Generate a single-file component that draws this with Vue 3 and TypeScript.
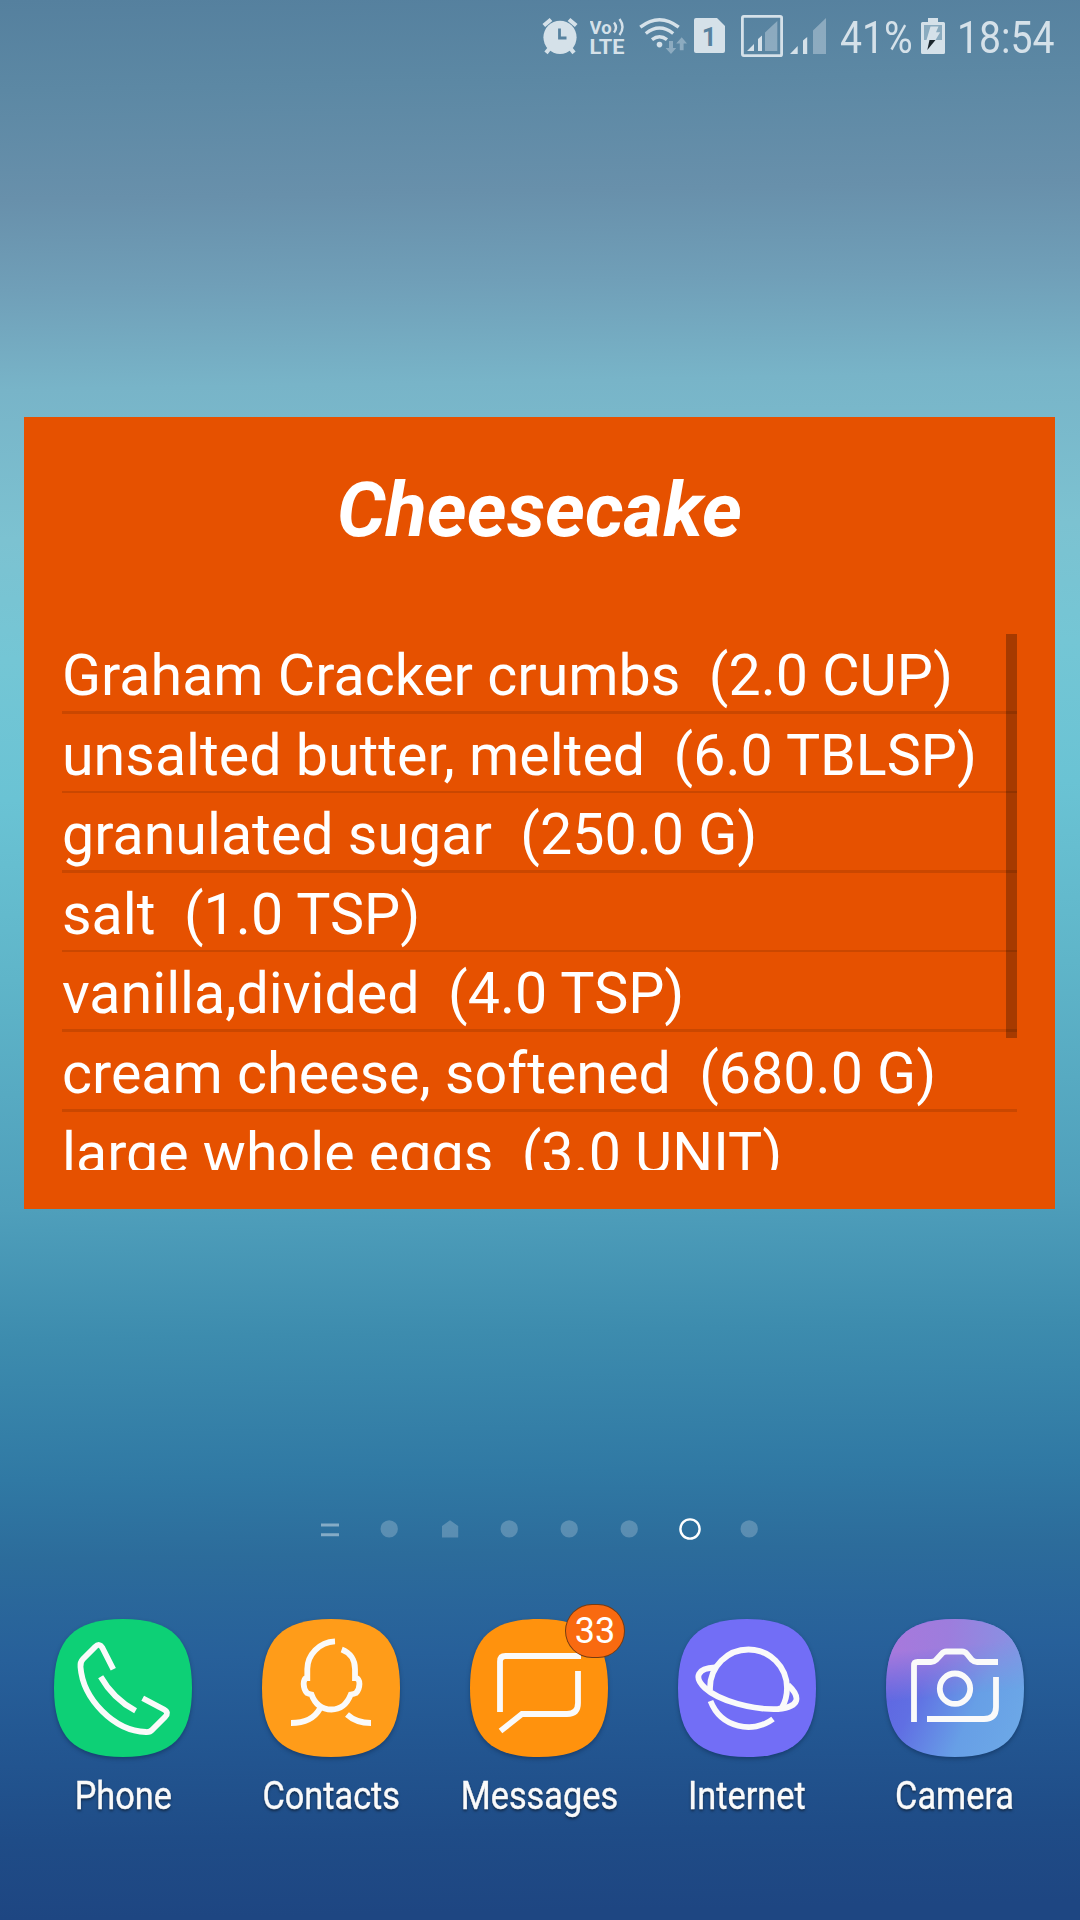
<script setup lang="ts">
interface Ingredient {
  name: string
  amount: string
}

interface DockApp {
  id: string
  label: string
  fill: string
  badge?: number
}

const title = 'Cheesecake'

const ingredients: Ingredient[] = [
  { name: 'Graham Cracker crumbs', amount: '(2.0 CUP)' },
  { name: 'unsalted butter, melted', amount: '(6.0 TBLSP)' },
  { name: 'granulated sugar', amount: '(250.0 G)' },
  { name: 'salt', amount: '(1.0 TSP)' },
  { name: 'vanilla,divided', amount: '(4.0 TSP)' },
  { name: 'cream cheese, softened', amount: '(680.0 G)' },
  { name: 'large whole eggs', amount: '(3.0 UNIT)' },
]

const pages: string[] = ['lines', 'dot', 'home', 'dot', 'dot', 'dot', 'current', 'dot']

const apps: DockApp[] = [
  { id: 'phone', label: 'Phone', fill: '#0dd076' },
  { id: 'contacts', label: 'Contacts', fill: '#ff9c19' },
  { id: 'messages', label: 'Messages', fill: '#ff920d', badge: 33 },
  { id: 'internet', label: 'Internet', fill: '#726ef6' },
  { id: 'camera', label: 'Camera', fill: 'url(#camBase)' },
]

const squircle = 'M69 0C118 0 138 20 138 69C138 118 118 138 69 138C20 138 0 118 0 69C0 20 20 0 69 0Z'
</script>

<template>
  <div class="screen">
    <header class="status">
      <svg class="alarm" width="36" height="75" viewBox="542 0 36 75">
        <circle cx="560" cy="37.3" r="16.6" />
        <path class="line" d="M543.8 25.5L551 19.5M576.2 25.5L569 19.5" stroke-width="4.2" />
        <path class="line" d="M549.5 48.5L546 52.8M570.5 48.5L574 52.8" stroke-width="4.2" />
        <path d="M559.5 28.5V38H566.5" fill="none" stroke="#57829f" stroke-width="2.8" />
      </svg>
      <svg class="volte" width="36" height="75" viewBox="590 0 36 75">
        <text x="589.6" y="33.8" font-size="18.5" textLength="22" lengthAdjust="spacingAndGlyphs">Vo</text>
        <text x="589.4" y="54" font-size="20.5" textLength="35" lengthAdjust="spacingAndGlyphs">LTE</text>
        <path class="line" d="M614 22.5Q618 27.5 614 32.5M619.5 19Q625.5 27 619.5 35" stroke-width="2.4" />
      </svg>
      <svg class="wifi" width="50" height="75" viewBox="638 0 50 75">
        <path class="line" d="M640.3 27.2Q659.5 12.3 678.7 27.2M645.8 33.5Q659.5 22.5 673.2 33.5M652 39.7Q659.5 33.8 667 39.7" stroke-width="3.4" />
        <circle cx="659.5" cy="44.6" r="2.8" />
        <path d="M669 41H673V48H676.2L671 54L665.6 48H669ZM679.8 50.3V43.5H676.2L681.7 37.3L687 43.5H683.6V50.3Z" opacity=".42" />
      </svg>
      <svg class="sim" width="31" height="75" viewBox="694 0 31 75">
        <path d="M696 18H717L725 26V51Q725 53 723 53H696Q694 53 694 51V20Q694 18 696 18Z" />
        <text x="709.3" y="45.5" font-size="26" text-anchor="middle" fill="#57829f">1</text>
      </svg>
      <svg class="boxed" width="42" height="75" viewBox="741 0 42 75">
        <rect x="742.4" y="16.4" width="39.2" height="39.2" rx="1.5" class="line" stroke-width="2.8" />
        <path d="M747 51L754 44V51ZM758 39L762 35.5V51H758Z" />
        <path d="M765 32.5L777.3 21V51H765Z" opacity=".42" />
      </svg>
      <svg class="signal" width="36" height="75" viewBox="790 0 36 75">
        <path d="M790 54L797.7 46V54ZM803 40.5L807.2 37V54H803Z" />
        <path d="M813 30.5L826 18V54H813Z" opacity=".42" />
      </svg>
      <span class="pct"><b>41%</b></span>
      <svg class="battery" width="24" height="75" viewBox="921 0 24 75">
        <path d="M928 18H938V22H943.5Q945 22 945 23.5V52.5Q945 54 943.5 54H922.5Q921 54 921 52.5V23.5Q921 22 922.5 22H928Z" />
        <path d="M924 25H942V40H924Z" fill="#8aabbf" />
        <path d="M930.5 26.5H938.5L936 32.3H940.2L935.5 40H926.5Z" />
        <path d="M929.5 40H935.5L927.3 50Z" fill="#1c262d" />
      </svg>
      <span class="time"><b>18:54</b></span>
    </header>

    <section class="widget">
      <h1>{{ title }}</h1>
      <div class="list">
        <div v-for="item in ingredients" :key="item.name" class="row">{{ item.name }}&nbsp; {{ item.amount }}</div>
        <div class="scrollbar"></div>
      </div>
    </section>

    <nav class="pages">
      <svg v-for="(page, i) in pages" :key="i" width="60" height="30" viewBox="0 0 60 30">
        <path v-if="page === 'lines'" d="M21 9.5H39V12.5H21ZM21 19.2H39V22.2H21Z" fill="#fff" opacity=".42" />
        <path v-else-if="page === 'home'" d="M22 23.500V12L30 6.300L38.200 12V23.500Z" fill="#fff" opacity=".22" />
        <circle v-else-if="page === 'current'" cx="30" cy="15" r="9.6" fill="none" stroke="#fff" stroke-width="2.4" />
        <circle v-else cx="29.2" cy="14.9" r="8.7" fill="#fff" opacity=".22" />
      </svg>
    </nav>

    <footer class="dock">
      <div v-for="app in apps" :key="app.id" class="app">
        <div class="icon">
          <svg width="138" height="138" viewBox="0 0 138 138">
            <defs v-if="app.id === 'camera'">
              <linearGradient id="camBase" x1="0.05" y1="0.45" x2="0.95" y2="0.85">
                <stop offset="0" stop-color="#5f68e2" />
                <stop offset=".2" stop-color="#606fe3" />
                <stop offset=".42" stop-color="#6488e5" />
                <stop offset=".62" stop-color="#679fe6" />
                <stop offset="1" stop-color="#6ca8e7" />
              </linearGradient>
              <linearGradient id="camTop" x1="0.1" y1="0" x2="1" y2="0.1">
                <stop offset="0" stop-color="#a679dc" />
                <stop offset=".4" stop-color="#9d7ddd" />
                <stop offset="1" stop-color="#8594e3" />
              </linearGradient>
              <linearGradient id="camFade" x1="0" y1="0" x2="0.1" y2="1">
                <stop offset="0" stop-color="#fff" />
                <stop offset=".24" stop-color="#fff" />
                <stop offset=".6" stop-color="#000" />
              </linearGradient>
              <mask id="camMask"><rect width="138" height="138" fill="url(#camFade)" /></mask>
            </defs>
            <path :d="squircle" :fill="app.fill" />
            <path v-if="app.id === 'camera'" :d="squircle" fill="url(#camTop)" mask="url(#camMask)" />
            <g v-if="app.id === 'phone'" class="glyph">
              <path d="M59.3 50.3L48.5 29Q45.5 23.5 41 28L29 40Q26 43 26.5 48C29 80 60 112 92 113Q96 113.3 98.5 110.5L111 98Q115.5 93.5 110 90.5L88.7 79.3" />
              <path d="M46.7 57.7Q59 79.5 81.6 91.8" />
            </g>
            <g v-else-if="app.id === 'contacts'" class="glyph">
              <path d="M73 22.3C57 23 45.3 36 45.3 50V59C40 59 41 70 45 74Q47 75 49.5 75.5C53 85 60 90.5 69.5 90.5C79 90.5 85 85 88.8 75.5Q92 75 94 74C98 70 99.500 59 93 59V50C93 41 88 33.500 79.700 30.500" />
              <path d="M29 104C43 104 52 100 58 89.500M85 95.500C91 101 98 104 109 104" />
            </g>
            <g v-else-if="app.id === 'messages'" class="glyph">
              <path d="M30 93V42.500Q30 37 35.500 37H111" />
              <path d="M108 52V84Q108 95 97 95H52L30.500 112" />
            </g>
            <g v-else-if="app.id === 'internet'" class="glyph">
              <path d="M32 71V69A38.500 38.500 0 0 1 109 69Q109 80 104 88.500" />
              <path d="M37 48.500C20 49 15 58 27 69C41 82 75 91 100 90C122 88 123 78 110 66" />
              <path d="M32.500 82C43 109 75 115 95 100" />
            </g>
            <g v-else class="glyph">
              <path d="M28 103V46.500Q28 43 31.500 43H45Q48 43 50 41L55.500 35Q57.500 32.500 60.500 32.500H76Q79 32.500 81 35L86 41Q88 43 91 43H112" />
              <path d="M110 58V88Q110 100 98 100H41" />
              <circle cx="69" cy="69.700" r="15.200" />
            </g>
          </svg>
          <span v-if="app.badge" class="badge">{{ app.badge }}</span>
        </div>
        <span class="label">{{ app.label }}</span>
      </div>
    </footer>
  </div>
</template>

<style>
body {
  margin: 0;
}
</style>

<style scoped>
.screen {
  width: 1080px;
  height: 1920px;
  overflow: hidden;
  display: flex;
  flex-direction: column;
  font-family: Roboto, sans-serif;
  color: #fff;
  background: linear-gradient(
    179deg,
    #55809e 0,
    #5c88a4 90px,
    #6890ab 200px,
    #709fb8 290px,
    #78b4c8 390px,
    #7cc2d1 540px,
    #74c6d5 660px,
    #6ac3d4 800px,
    #5fb5c9 980px,
    #4f9fbb 1210px,
    #3d8cae 1340px,
    #3079a4 1480px,
    #2c6c9b 1560px,
    #27609a 1660px,
    #235792 1740px,
    #1f4c87 1840px,
    #1e4682 1920px
  );
}

.status {
  height: 75px;
  display: flex;
  padding-left: 542px;
  color: #d5e1e9;
}

.status svg {
  flex: none;
  fill: #d5e1e9;
  font-weight: 700;
}

.status .line {
  fill: none;
  stroke: #d5e1e9;
}

.volte {
  margin-left: 12px;
}

.wifi {
  margin-left: 12px;
}

.sim {
  margin-left: 6px;
}

.boxed {
  margin-left: 16px;
}

.signal {
  margin-left: 7px;
}

.pct,
.time {
  flex: none;
  font-size: 45px;
  line-height: 75px;
}

.pct {
  width: 81px;
  margin-left: 14px;
}

.time {
  width: 100px;
  margin-left: 12px;
}

.status b {
  display: inline-block;
  font-weight: 400;
  transform: scaleX(0.87);
  transform-origin: 0 50%;
}

.widget {
  box-sizing: border-box;
  width: 1031px;
  height: 792px;
  margin: 342px 0 0 24px;
  padding: 0 38px 39px;
  background: #e65100;
}

h1 {
  margin: 0;
  height: 217px;
  font-size: 76.4px;
  line-height: 187px;
  font-weight: 700;
  font-style: italic;
  text-align: center;
}

.list {
  position: relative;
  height: 536px;
  overflow: hidden;
}

.row {
  height: 79.6px;
  font-size: 57.35px;
  line-height: 83px;
  white-space: pre;
}

.row::after {
  content: '';
  display: block;
  height: 2.6px;
  margin-top: -6px;
  background: rgba(0, 0, 0, 0.12);
}

.scrollbar {
  position: absolute;
  top: 0;
  right: 0;
  width: 11px;
  height: 404px;
  background: rgba(0, 0, 0, 0.28);
}

.pages {
  display: flex;
  margin: 305px 0 0 300px;
}

.dock {
  display: flex;
  margin: 75px 0 0 19px;
}

.app {
  width: 208px;
  display: flex;
  flex-direction: column;
  align-items: center;
}

.icon {
  position: relative;
  width: 138px;
  height: 138px;
}

.icon svg {
  display: block;
  filter: drop-shadow(0 2px 2px rgba(0, 20, 50, 0.35));
}

.glyph {
  fill: none;
  stroke: #fafafa;
  stroke-width: 5.8;
}

.badge {
  position: absolute;
  left: 95px;
  top: -15px;
  box-sizing: border-box;
  width: 60px;
  height: 54px;
  border: 1px solid rgba(60, 40, 20, 0.7);
  border-radius: 27px;
  background: #f96a10;
  font-size: 36px;
  line-height: 52px;
  text-align: center;
}

.label {
  margin-top: 16px;
  font-size: 39px;
  line-height: 46px;
  color: #fafafa;
  transform: scaleX(0.88);
  -webkit-text-stroke: 0.4px #fafafa;
  text-shadow: 0 2px 3px rgba(0, 0, 0, 0.5);
}
</style>
